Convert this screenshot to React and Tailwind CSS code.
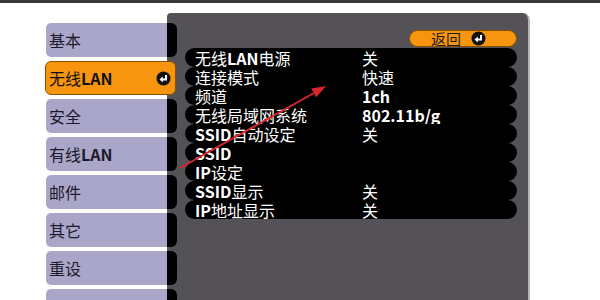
import React from 'react';

const FONT = { fontFamily: '"Noto Sans CJK SC", "Noto Sans", sans-serif' };

const menu = ['基本', '无线LAN', '安全', '有线LAN', '邮件', '其它', '重设', ''];

const rows = [
  ['无线LAN电源', '关'],
  ['连接模式', '快速'],
  ['频道', '1ch'],
  ['无线局域网系统', '802.11b/g'],
  ['SSID自动设定', '关'],
  ['SSID', ''],
  ['IP设定', ''],
  ['SSID显示', '关'],
  ['IP地址显示', '关'],
];

// latin parts of the OSD text are drawn heavier than the CJK parts
const Txt = ({ s }) =>
  s.split(/([A-Za-z0-9./]+)/).map((p, i) =>
    /[A-Za-z0-9]/.test(p) ? <b key={i} className="font-bold">{p}</b> : <span key={i}>{p}</span>
  );

const Enter = () => (
  <svg width="15" height="15" viewBox="0 0 15 15">
    <circle cx="7.5" cy="7.5" r="7" fill="#111" />
    <path d="M10 4 V8.5 H6" stroke="#fff" strokeWidth="2" fill="none" />
    <polygon points="3.5,8.5 6.8,5.6 6.8,11.4" fill="#fff" />
  </svg>
);

export default function App() {
  return (
    <div className="relative w-[600px] h-[300px] bg-white overflow-hidden" style={FONT}>
      <div className="h-[3px] bg-[#3a3a3a]" />
      <div className="flex pl-[46px] pt-[10px]">
        {/* Left menu */}
        <div className="relative z-10 w-[131px] flex flex-col gap-[4px] pt-[10px] shrink-0">
          {menu.map((m, i) =>
            i === 1 ? (
              <div
                key={i}
                className="h-[34px] -ml-[1px] w-[131px] flex items-center justify-between pl-[3px] pr-[4px] rounded-[6px] bg-[#f7960e] border border-[#8a5200] text-[16px] text-[#111]"
              >
                <span><Txt s={m} /></span>
                <Enter />
              </div>
            ) : (
              <div key={i} className="h-[34px] flex">
                <div className="flex-1 flex items-center pl-[3px] rounded-l-[5px] bg-[#aaa6c9] text-[16px] text-[#1c1a2a]">
                  <Txt s={m} />
                </div>
                <div className="w-[10px] bg-black rounded-r-[6px]" />
              </div>
            )
          )}
        </div>

        {/* Right panel */}
        <div className="-ml-[10px] w-[363px] h-[300px] shrink-0 bg-[#545256] rounded-tl-[4px] rounded-tr-[7px] border-r-[2px] border-[#b4b4b4] pt-[17px]">
          <div className="flex justify-end pr-[11px]">
            <div className="w-[108px] h-[17px] rounded-full bg-[#f7960e] border border-[#8a5200] flex items-center pl-[21px] gap-[10px] text-[15px] leading-none text-[#1a1a1a]">
              <span>返回</span>
              <Enter />
            </div>
          </div>
          <div className="ml-[18px] w-[332px] mt-[1px] flex flex-col">
            {rows.map(([k, v], i) => (
              <div key={i} className="h-[19px] rounded-full bg-black flex items-center text-white text-[16px] leading-none">
                <div className="pl-[10px] w-[177px]"><Txt s={k} /></div>
                <div><Txt s={v} /></div>
              </div>
            ))}
          </div>
        </div>
      </div>

      {/* red annotation arrow */}
      <svg className="absolute inset-0 pointer-events-none" width="600" height="300">
        <line x1="180" y1="168" x2="314" y2="93" stroke="#d9262b" strokeWidth="2" />
        <polygon points="326,86 316.2,97.3 311.3,88.5" fill="#d9262b" />
      </svg>
    </div>
  );
}
